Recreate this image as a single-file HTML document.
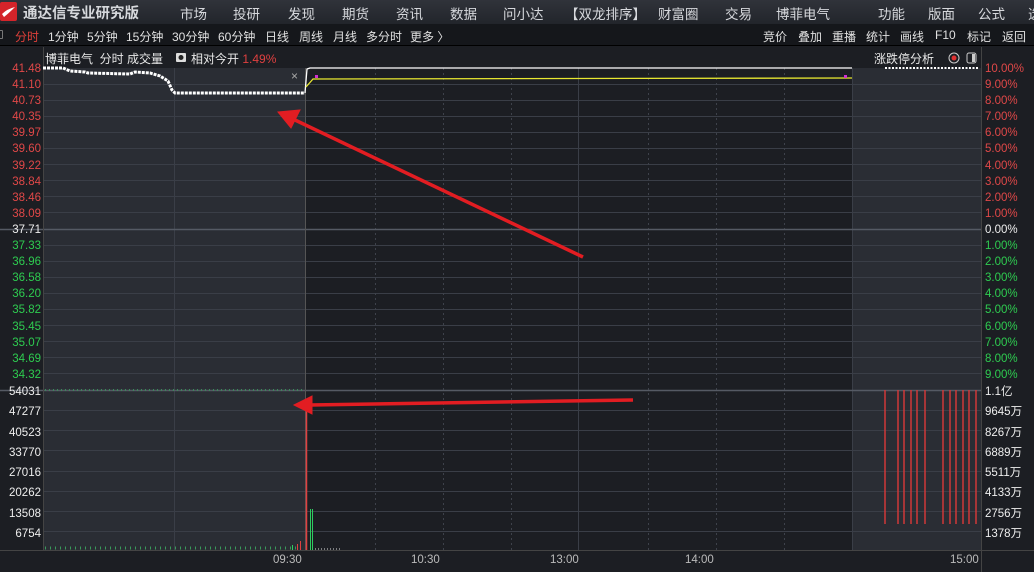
<!DOCTYPE html>
<html><head><meta charset="utf-8"><style>
*{margin:0;padding:0;box-sizing:border-box}
body{width:1034px;height:572px;background:#1c1e23;overflow:hidden;font-family:"Liberation Sans","Noto Sans CJK SC",sans-serif;position:relative}
.top{position:absolute;left:0;top:0;width:1034px;height:24px;background:linear-gradient(#30333a,#22252b);color:#d6d8dc;font-size:13.5px}
.top span{position:absolute;top:3px}
.bar2{position:absolute;left:0;top:24px;width:1034px;height:22px;background:#15171b;color:#e0e0e0;font-size:12px;border-bottom:1px solid #000}
.bar2 span{position:absolute;top:4px}
.t{position:absolute;font-size:11.5px;font-family:"Liberation Sans","Noto Sans CJK SC",sans-serif;white-space:nowrap}
</style></head><body>
<div class="top">
<div style="position:absolute;left:0;top:2px;width:17px;height:19px;background:#d4242a;border-radius:2px"></div>
<svg style="position:absolute;left:1px;top:5px" width="15" height="13"><path d="M1 9 Q6 4 14 2 Q8 8 3 12Z" fill="#fff"/></svg>
<span style="left:23px;font-weight:bold;font-size:14.5px;top:2px">通达信专业研究版</span>
<span style="left:180px">市场</span><span style="left:233px">投研</span><span style="left:288px">发现</span><span style="left:342px">期货</span><span style="left:396px">资讯</span><span style="left:450px">数据</span><span style="left:503px">问小达</span><span style="left:565px">【双龙排序】</span><span style="left:658px">财富圈</span><span style="left:725px">交易</span><span style="left:776px">博菲电气</span><span style="left:878px">功能</span><span style="left:928px">版面</span><span style="left:978px">公式</span><span style="left:1028px">选</span>
</div>
<div class="bar2">
<div style="position:absolute;left:-3px;top:6px;width:6px;height:9px;border:1px solid #777;border-radius:1px"></div>
<span style="left:15px;color:#e0403a">分时</span><span style="left:48px">1分钟</span><span style="left:87px">5分钟</span><span style="left:126px">15分钟</span><span style="left:172px">30分钟</span><span style="left:218px">60分钟</span><span style="left:265px">日线</span><span style="left:299px">周线</span><span style="left:333px">月线</span><span style="left:366px">多分时</span><span style="left:410px">更多 〉</span>
<span style="left:763px">竞价</span><span style="left:798px">叠加</span><span style="left:832px">重播</span><span style="left:866px">统计</span><span style="left:900px">画线</span><span style="left:935px">F10</span><span style="left:967px">标记</span><span style="left:1002px">返回</span>
</div>
<svg style="position:absolute;left:0;top:0" width="1034" height="572">
<rect x="43" y="68" width="262" height="482" fill="#2a2d34"/>
<rect x="852" y="68" width="129" height="482" fill="#2a2d34"/>
<g stroke="#3a3e47" stroke-width="1">
<line x1="43" y1="84.5" x2="981" y2="84.5"/><line x1="43" y1="100.5" x2="981" y2="100.5"/><line x1="43" y1="116.5" x2="981" y2="116.5"/><line x1="43" y1="132.5" x2="981" y2="132.5"/><line x1="43" y1="148.5" x2="981" y2="148.5"/><line x1="43" y1="164.5" x2="981" y2="164.5"/><line x1="43" y1="180.5" x2="981" y2="180.5"/><line x1="43" y1="196.5" x2="981" y2="196.5"/><line x1="43" y1="212.5" x2="981" y2="212.5"/>
<line x1="43" y1="245.5" x2="981" y2="245.5"/><line x1="43" y1="261.5" x2="981" y2="261.5"/><line x1="43" y1="277.5" x2="981" y2="277.5"/><line x1="43" y1="293.5" x2="981" y2="293.5"/><line x1="43" y1="309.5" x2="981" y2="309.5"/><line x1="43" y1="325.5" x2="981" y2="325.5"/><line x1="43" y1="341.5" x2="981" y2="341.5"/><line x1="43" y1="357.5" x2="981" y2="357.5"/><line x1="43" y1="373.5" x2="981" y2="373.5"/>
<line x1="43" y1="410.5" x2="981" y2="410.5"/><line x1="43" y1="430.5" x2="981" y2="430.5"/><line x1="43" y1="450.5" x2="981" y2="450.5"/><line x1="43" y1="471.5" x2="981" y2="471.5"/><line x1="43" y1="491.5" x2="981" y2="491.5"/><line x1="43" y1="511.5" x2="981" y2="511.5"/><line x1="43" y1="531.5" x2="981" y2="531.5"/>
<line x1="174.5" y1="68" x2="174.5" y2="550"/><line x1="578.5" y1="68" x2="578.5" y2="550"/><line x1="852.5" y1="68" x2="852.5" y2="550"/>
</g>
<g stroke="#3e424b" stroke-dasharray="2,3"><line x1="375.5" y1="68" x2="375.5" y2="550"/><line x1="443.5" y1="68" x2="443.5" y2="550"/><line x1="511.5" y1="68" x2="511.5" y2="550"/><line x1="648.5" y1="68" x2="648.5" y2="550"/><line x1="716.5" y1="68" x2="716.5" y2="550"/><line x1="784.5" y1="68" x2="784.5" y2="550"/></g>
<g stroke="#555a64" stroke-width="1.5"><line x1="0" y1="229.5" x2="981" y2="229.5"/><line x1="0" y1="390.5" x2="981" y2="390.5"/></g>
<line x1="0" y1="550.5" x2="1034" y2="550.5" stroke="#444"/>
<line x1="43.5" y1="47" x2="43.5" y2="550" stroke="#444"/>
<line x1="981.5" y1="47" x2="981.5" y2="572" stroke="#444"/>
<line x1="305.5" y1="68" x2="305.5" y2="550" stroke="#555"/>
<polyline points="43,68 63,68 70,71 85,72 88,73 130,74 135,72 150,73 160,76 168,81 172,90 175,93 305,93" fill="none" stroke="#fff" stroke-width="3" stroke-dasharray="3,1"/>
<polyline points="305,93 307,69 310,68 852,68" fill="none" stroke="#fff" stroke-width="1.3"/>
<polyline points="306,87 313,79 852,78" fill="none" stroke="#e8e830" stroke-width="1.3"/>
<rect x="315" y="75" width="3" height="3" fill="#d030d0"/><rect x="844" y="75" width="3" height="3" fill="#d030d0"/>
<line x1="885" y1="68" x2="978" y2="68" stroke="#fff" stroke-width="2" stroke-dasharray="2,1.5"/>
<line x1="45" y1="390" x2="305" y2="390" stroke="#3a8a5a" stroke-width="2" stroke-dasharray="1,3"/>
<line x1="45" y1="548" x2="300" y2="548" stroke="#3a9a5a" stroke-width="3" stroke-dasharray="1,4"/>
<g stroke="#e04040"><line x1="300.5" y1="541" x2="300.5" y2="550"/><line x1="297.5" y1="544" x2="297.5" y2="550"/><line x1="306.5" y1="405" x2="306.5" y2="550" stroke-width="1.5"/></g>
<g stroke="#2ecc60"><line x1="310.5" y1="509" x2="310.5" y2="550"/><line x1="312.5" y1="509" x2="312.5" y2="550"/><line x1="292.5" y1="545" x2="292.5" y2="550"/></g>
<line x1="315" y1="549" x2="340" y2="549" stroke="#ddd" stroke-dasharray="1,2"/>
<g stroke="#d03838" stroke-width="1.5"><line x1="885" y1="390" x2="885" y2="524"/><line x1="898" y1="390" x2="898" y2="524"/><line x1="904" y1="390" x2="904" y2="524"/><line x1="911" y1="390" x2="911" y2="524"/><line x1="917" y1="390" x2="917" y2="524"/><line x1="925" y1="390" x2="925" y2="524"/><line x1="943" y1="390" x2="943" y2="524"/><line x1="950" y1="390" x2="950" y2="524"/><line x1="956" y1="390" x2="956" y2="524"/><line x1="963" y1="390" x2="963" y2="524"/><line x1="969" y1="390" x2="969" y2="524"/><line x1="976" y1="390" x2="976" y2="524"/></g>
<g stroke="#e21d22" stroke-width="3.5" fill="#e21d22">
<line x1="583" y1="257" x2="295" y2="120"/><polygon points="278,112 300,110 291,128" stroke-width="1"/>
<line x1="633" y1="400" x2="310" y2="405"/><polygon points="294,405 312,396 312,414" stroke-width="1"/>
</g>
<text x="291" y="80" fill="#aaa" font-size="12">×</text>
<circle cx="954" cy="58" r="5" fill="none" stroke="#ccc"/><circle cx="954" cy="58" r="2.5" fill="#e03030"/>
<rect x="967" y="53" width="9" height="10" rx="2" fill="none" stroke="#ccc"/><rect x="972" y="54" width="3" height="8" fill="#ccc"/>
<rect x="176" y="53" width="10" height="9" rx="1" fill="#ddd"/><circle cx="181" cy="57.5" r="2.5" fill="#222"/>
</svg>
<div class="t" style="left:45px;top:50px;color:#e8e8e8;font-size:12px">博菲电气&nbsp;&nbsp;分时 成交量</div>
<div class="t" style="left:191px;top:50px;color:#e8e8e8;font-size:12px">相对今开 <span style="color:#e04040">1.49%</span></div>
<div class="t" style="left:874px;top:50px;color:#e8e8e8;font-size:12px">涨跌停分析</div>
<div style="position:absolute;left:0;top:61px;width:41px;text-align:right;font-size:11.5px;line-height:16.1px;color:#e04848">41.48<br>41.10<br>40.73<br>40.35<br>39.97<br>39.60<br>39.22<br>38.84<br>38.46<br>38.09<br><span style="color:#eee">37.71</span><br><span style="color:#2ecc50">37.33<br>36.96<br>36.58<br>36.20<br>35.82<br>35.45<br>35.07<br>34.69<br>34.32</span></div>
<div style="position:absolute;left:985px;top:61px;font-size:11.5px;line-height:16.1px;color:#e04848">10.00%<br>9.00%<br>8.00%<br>7.00%<br>6.00%<br>5.00%<br>4.00%<br>3.00%<br>2.00%<br>1.00%<br><span style="color:#eee">0.00%</span><br><span style="color:#2ecc50">1.00%<br>2.00%<br>3.00%<br>4.00%<br>5.00%<br>6.00%<br>7.00%<br>8.00%<br>9.00%</span></div>
<div style="position:absolute;left:0;top:382px;width:41px;text-align:right;font-size:11.5px;line-height:20.3px;color:#eee">54031<br>47277<br>40523<br>33770<br>27016<br>20262<br>13508<br>6754</div>
<div style="position:absolute;left:985px;top:382px;font-size:11.5px;line-height:20.3px;color:#eee">1.1亿<br>9645万<br>8267万<br>6889万<br>5511万<br>4133万<br>2756万<br>1378万</div>
<div class="t" style="left:273px;top:554px;color:#bbb">09:30</div>
<div class="t" style="left:411px;top:554px;color:#bbb">10:30</div>
<div class="t" style="left:550px;top:554px;color:#bbb">13:00</div>
<div class="t" style="left:685px;top:554px;color:#bbb">14:00</div>
<div class="t" style="left:950px;top:554px;color:#bbb">15:00</div>
</body></html>
